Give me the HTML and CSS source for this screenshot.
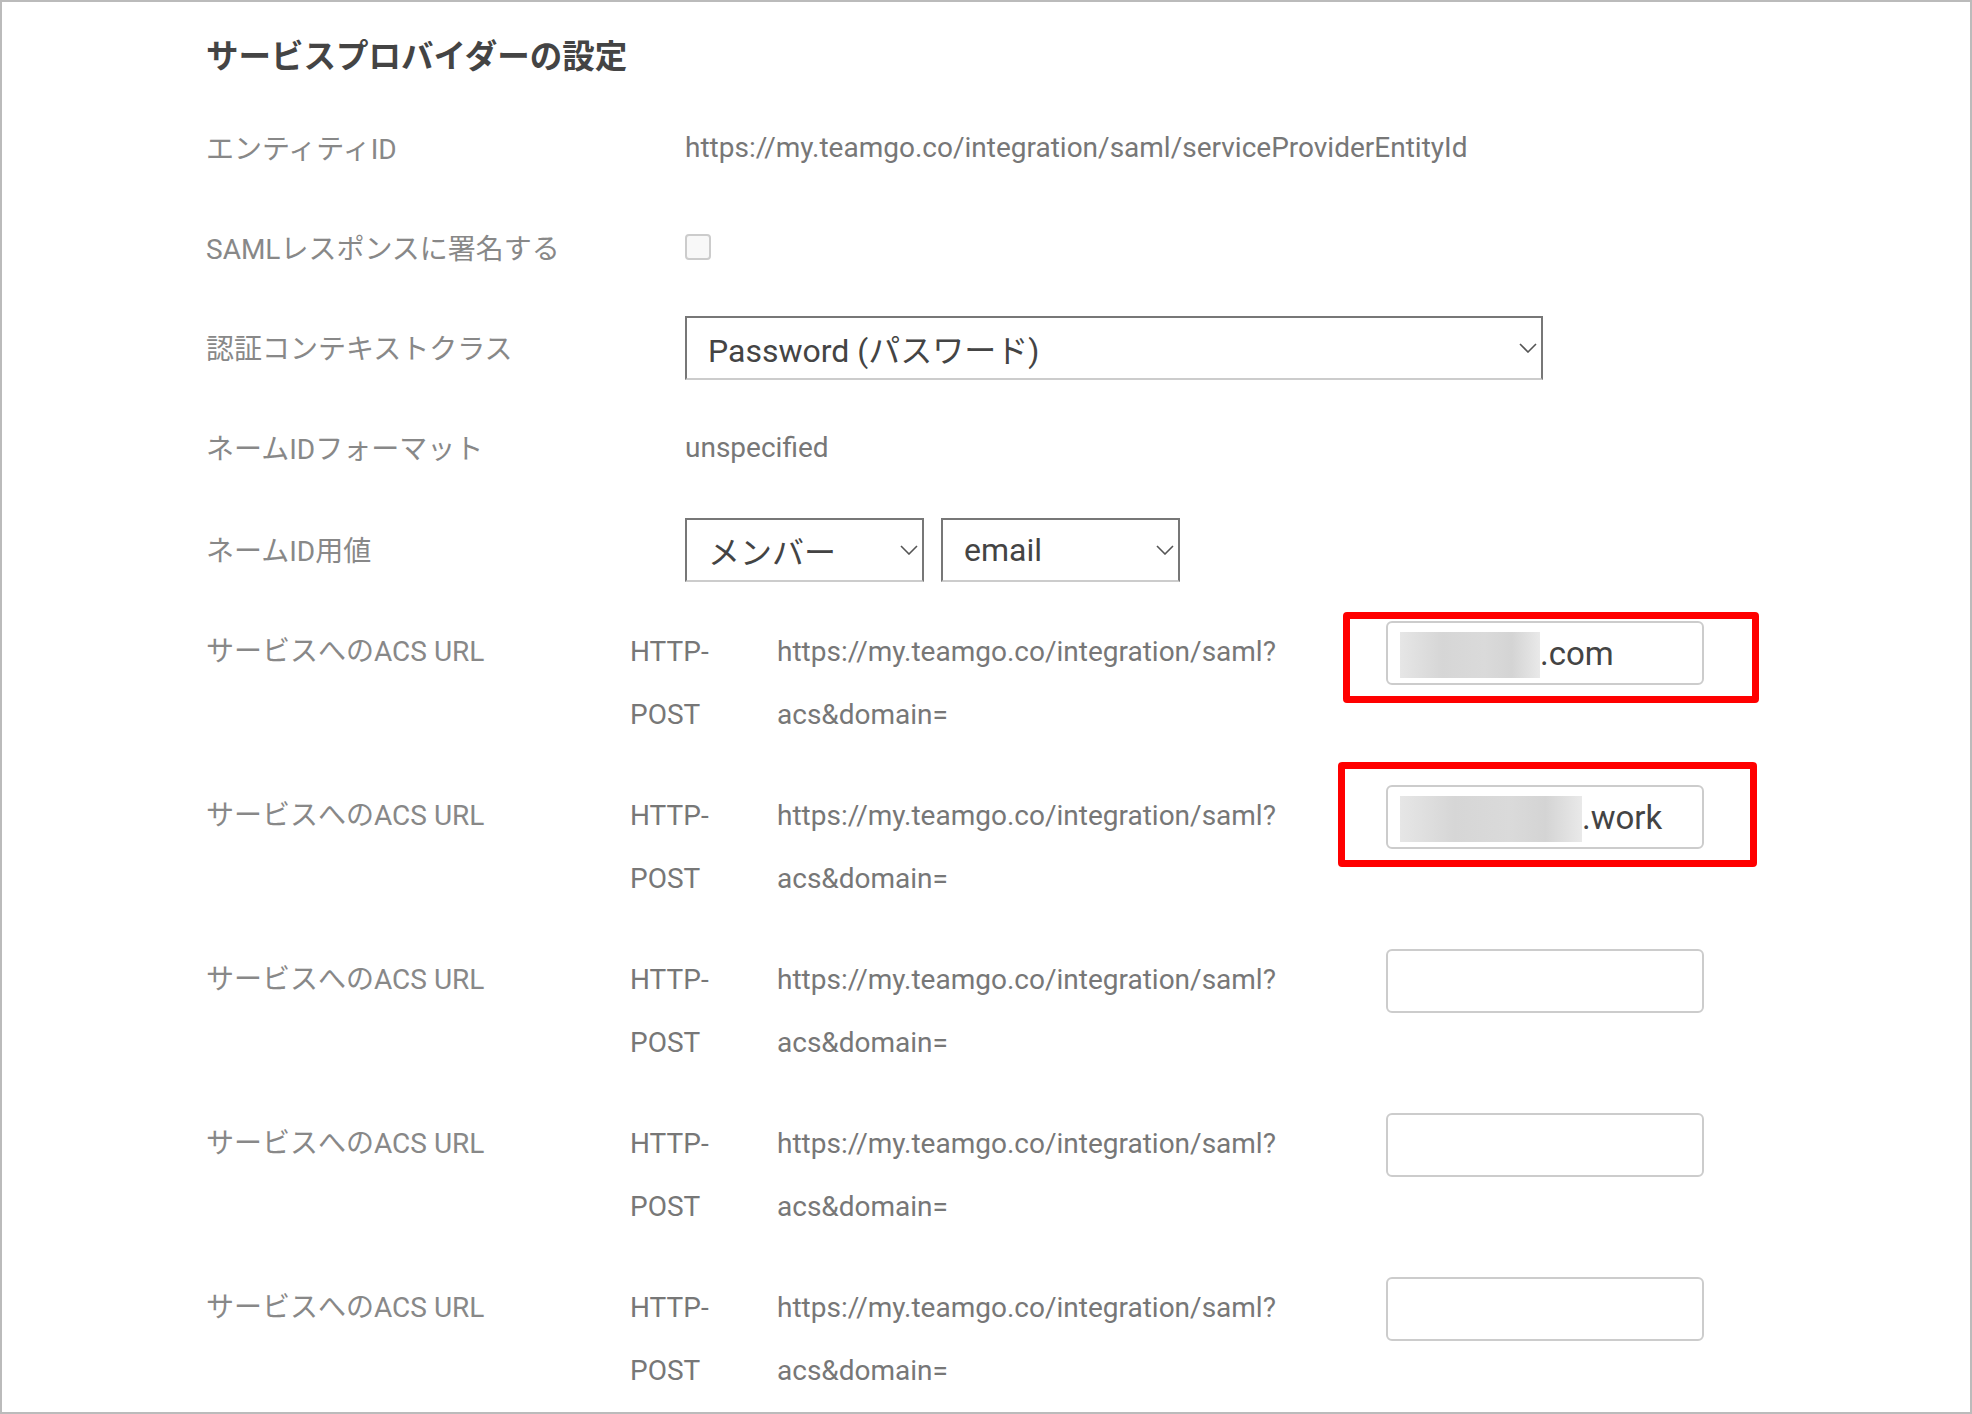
FILE: index.html
```html
<html>

<head>
    <title>サービスプロバイダーの設定</title>
    <link rel="stylesheet" href="styles.css">
</head>

<body>
    <div class="page">
        <h1 class="title">サービスプロバイダーの設定</h1>

        <div class="row">
            <div class="label">エンティティID</div>
            <div class="value">https://my.teamgo.co/integration/saml/serviceProviderEntityId</div>
        </div>

        <div class="row">
            <div class="label">SAMLレスポンスに署名する</div>
            <span class="checkbox"></span>
        </div>

        <div class="row">
            <div class="label">認証コンテキストクラス</div>
            <div class="select select-wide">
                <span>Password (パスワード)</span>
                <svg class="chevron" width="18" height="10" viewBox="0 0 18 10"><polyline points="1,1 9,9 17,1" /></svg>
            </div>
        </div>

        <div class="row">
            <div class="label">ネームIDフォーマット</div>
            <div class="value">unspecified</div>
        </div>

        <div class="row row-selects">
            <div class="label">ネームID用値</div>
            <div class="select select-small">
                <span>メンバー</span>
                <svg class="chevron" width="18" height="10" viewBox="0 0 18 10"><polyline points="1,1 9,9 17,1" /></svg>
            </div>
            <div class="select select-small">
                <span>email</span>
                <svg class="chevron" width="18" height="10" viewBox="0 0 18 10"><polyline points="1,1 9,9 17,1" /></svg>
            </div>
        </div>

        <div class="acs-list">
            <div class="acs-row">
                <div class="acs-label">サービスへのACS URL</div>
                <div class="acs-method">HTTP-POST</div>
                <div class="acs-url">https://my.teamgo.co/integration/saml?<wbr>acs&amp;domain=</div>
                <div class="acs-input">
                    <span class="blurred" style="width: 140px"></span>.com
                    <span class="highlight highlight-1"></span>
                </div>
            </div>
            <div class="acs-row">
                <div class="acs-label">サービスへのACS URL</div>
                <div class="acs-method">HTTP-POST</div>
                <div class="acs-url">https://my.teamgo.co/integration/saml?<wbr>acs&amp;domain=</div>
                <div class="acs-input">
                    <span class="blurred" style="width: 182px"></span>.work
                    <span class="highlight highlight-2"></span>
                </div>
            </div>
            <div class="acs-row">
                <div class="acs-label">サービスへのACS URL</div>
                <div class="acs-method">HTTP-POST</div>
                <div class="acs-url">https://my.teamgo.co/integration/saml?<wbr>acs&amp;domain=</div>
                <div class="acs-input"></div>
            </div>
            <div class="acs-row">
                <div class="acs-label">サービスへのACS URL</div>
                <div class="acs-method">HTTP-POST</div>
                <div class="acs-url">https://my.teamgo.co/integration/saml?<wbr>acs&amp;domain=</div>
                <div class="acs-input"></div>
            </div>
            <div class="acs-row">
                <div class="acs-label">サービスへのACS URL</div>
                <div class="acs-method">HTTP-POST</div>
                <div class="acs-url">https://my.teamgo.co/integration/saml?<wbr>acs&amp;domain=</div>
                <div class="acs-input"></div>
            </div>
        </div>
    </div>
</body>

</html>
```

FILE: styles.css
```css
body {
    margin: 0;
    background-color: white;
    font-family: Roboto, "Noto Sans CJK JP", sans-serif;
    overflow: hidden;
}

.page {
    height: 100vh;
    box-sizing: border-box;
    border: 2px solid #bbb;
    padding: 31px 0 0 204px;
}

.title {
    margin: 0 0 16px;
    font-size: 32.5px;
    line-height: 48px;
    font-weight: bold;
    color: #444;
}

.row {
    display: flex;
    align-items: center;
    height: 100px;
}

.row-selects {
    padding-top: 4px;
    height: 96px;
}

.label {
    width: 479px;
    flex: none;
    font-size: 28px;
    color: #888;
}

.value {
    font-size: 28px;
    color: #777;
}

.checkbox {
    width: 26px;
    height: 26px;
    box-sizing: border-box;
    border: 2px solid #ccc;
    border-radius: 4px;
    background-color: #f8f8f8;
}

.select {
    height: 64px;
    margin-top: 2px;
    box-sizing: border-box;
    display: flex;
    align-items: center;
    justify-content: space-between;
    padding: 0 4px 0 21px;
    border: 2px solid #777;
    border-bottom-color: #ccc;
    font-size: 32px;
    color: #444;
}

.select-wide {
    width: 858px;
}

.select-small {
    width: 239px;
    margin-right: 17px;
}

.chevron polyline {
    fill: none;
    stroke: #555;
    stroke-width: 1.6;
}

.acs-list {
    margin-top: 23px;
}

.acs-row {
    display: flex;
    height: 164px;
    line-height: 63px;
    font-size: 28px;
    color: #777;
}

.acs-label {
    width: 424px;
    flex: none;
    font-size: 28px;
    color: #888;
}

.acs-method {
    width: 97px;
    padding-right: 50px;
    flex: none;
}

.acs-url {
    width: 609px;
    flex: none;
}

.acs-input {
    position: relative;
    width: 318px;
    height: 64px;
    margin-top: 1px;
    box-sizing: border-box;
    display: flex;
    align-items: center;
    padding-left: 12px;
    border: 2px solid #ccc;
    border-radius: 6px;
    font-size: 33px;
    color: #444;
    line-height: normal;
}

.blurred {
    display: inline-block;
    height: 46px;
    margin-top: 4px;
    background: linear-gradient(90deg, #e6e6e6, #d6d6d6 30%, #dadada 60%, #d4d4d4 80%, #e9e9e9);
}

.highlight {
    position: absolute;
    box-sizing: border-box;
    border: 7px solid #f00;
    border-radius: 4px;
}

.highlight-1 {
    left: -45px;
    top: -11px;
    width: 416px;
    height: 91px;
}

.highlight-2 {
    left: -50px;
    top: -25px;
    width: 419px;
    height: 105px;
}
```
